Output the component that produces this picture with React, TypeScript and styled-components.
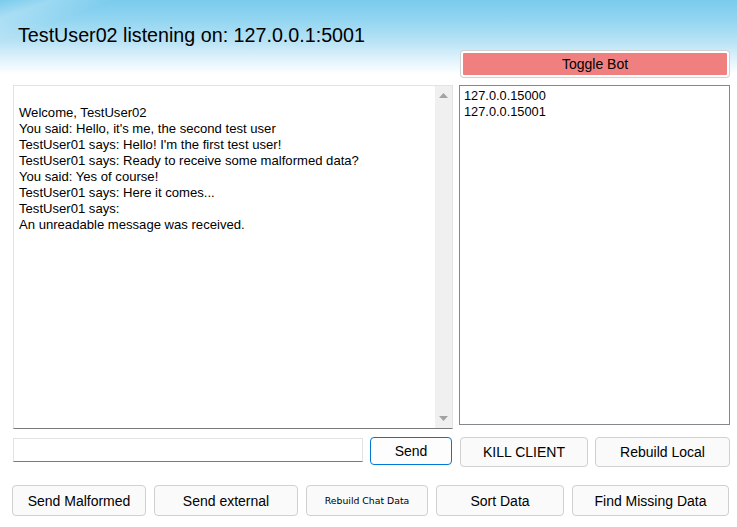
import React from "react";
import styled, { createGlobalStyle } from "styled-components";

const Global = createGlobalStyle`
  html, body { margin: 0; padding: 0; background: #ffffff; }
  body { font-family: "Liberation Sans", Arial, sans-serif; }
  * { box-sizing: border-box; }
`;

const Window = styled.div`
  width: 737px;
  height: 527px;
  overflow: hidden;
  position: relative;
  background:
    linear-gradient(160deg, rgba(255,255,255,0) 0px, rgba(255,255,255,0.25) 18px, rgba(255,255,255,0) 40px) 0 0 / 120px 72px no-repeat,
    linear-gradient(to bottom, #79cbed 0px, #93d5f1 20px, #b9e3f5 42px, #e6f5fc 62px, #ffffff 74px) 0 0 / 100% 74px no-repeat,
    #ffffff;
  display: flex;
  flex-direction: column;
`;

const Header = styled.header`
  height: 51px;
  padding: 23px 0 0 18px;
`;

const Title = styled.h1`
  margin: 0;
  font-family: "Liberation Sans", Arial, sans-serif;
  font-weight: normal;
  font-size: 19.7px;
  line-height: 24px;
  color: #000;
`;

const Row = styled.div<{ $top: number }>`
  display: grid;
  grid-template-columns: 440px 271px;
  column-gap: 6px;
  padding-left: 13px;
  margin-top: ${(p) => p.$top}px;
  align-items: start;
`;

const RightCell = styled.div`
  grid-column: 2;
  display: flex;
`;

const LeftCell = styled.div`
  display: flex;
  align-items: flex-start;
`;

const ToggleButton = styled.button`
  margin-left: 2px;
  width: 268px;
  height: 26px;
  border: 2px solid #ffffff;
  border-radius: 3px;
  box-shadow: 0 0 0 1px #d2d2d2;
  background: #f08080;
  font-family: "Liberation Sans", Arial, sans-serif;
  font-size: 14px;
  color: #000;
  padding: 0;
`;

const ChatBox = styled.div`
  height: 344px;
  border: 1px solid #e3e3e3;
  border-bottom-color: #7a7a7a;
  background: #fff;
  display: flex;
`;

const ChatText = styled.div`
  flex: 1;
  padding: 3px 0 0 5px;
  font-size: 13.1px;
  line-height: 16px;
  color: #000;
  white-space: pre-wrap;
`;

const ScrollBar = styled.div`
  width: 17px;
  background: #f0f0f0;
  display: flex;
  flex-direction: column;
  justify-content: space-between;
  align-items: center;
  padding: 7px 0 7px 0;
`;

const Arrow = styled.svg`
  display: block;
`;

const ListBox = styled.div`
  height: 340px;
  border: 1px solid #828790;
  background: #fff;
  padding: 2px 0 0 4px;
  font-size: 12.8px;
  line-height: 16px;
  color: #000;
`;

const TextInput = styled.input`
  margin-top: 1px;
  width: 350px;
  height: 24px;
  border: 1px solid #e3e3e3;
  border-bottom-color: #7a7a7a;
  background: #fff;
  outline: none;
  padding: 0 3px;
  font-family: "Liberation Sans", Arial, sans-serif;
  font-size: 13px;
`;

const Button = styled.button<{ $w: number; $h: number; $primary?: boolean; $small?: boolean }>`
  width: ${(p) => p.$w}px;
  height: ${(p) => p.$h}px;
  flex: none;
  padding: 0;
  border: 1px solid ${(p) => (p.$primary ? "#0078d7" : "#d0d0d0")};
  border-radius: 4px;
  background: ${(p) => (p.$primary ? "#fdfdfd" : "#fafafa")};
  color: #000;
  font-family: ${(p) => (p.$small ? '"DejaVu Sans", Verdana, sans-serif' : '"Liberation Sans", Arial, sans-serif')};
  font-size: ${(p) => (p.$small ? "9.3px" : "14px")};
`;

const SendWrap = styled.div`
  margin-left: 7px;
`;

const ButtonPair = styled.div`
  display: flex;
  gap: 7px;
  margin-left: 1px;
`;

const BottomBar = styled.div`
  display: flex;
  gap: 8px;
  padding-left: 12px;
  margin-top: 18px;
`;

const chatLines = [
  "",
  "Welcome, TestUser02",
  "You said: Hello, it's me, the second test user",
  "TestUser01 says: Hello! I'm the first test user!",
  "TestUser01 says: Ready to receive some malformed data?",
  "You said: Yes of course!",
  "TestUser01 says: Here it comes...",
  "TestUser01 says: ",
  "An unreadable message was received.",
].join("\n");

export default function App() {
  return (
    <>
      <Global />
      <Window>
        <Header>
          <Title>TestUser02 listening on: 127.0.0.1:5001</Title>
        </Header>
        <Row $top={0}>
          <RightCell>
            <ToggleButton>Toggle Bot</ToggleButton>
          </RightCell>
        </Row>
        <Row $top={8}>
          <ChatBox>
            <ChatText>{chatLines}</ChatText>
            <ScrollBar>
              <Arrow width="9" height="5" viewBox="0 0 9 5">
                <polygon points="0,5 9,5 4.5,0" fill="#a3a3a3" />
              </Arrow>
              <Arrow width="9" height="5" viewBox="0 0 9 5">
                <polygon points="0,0 9,0 4.5,5" fill="#a3a3a3" />
              </Arrow>
            </ScrollBar>
          </ChatBox>
          <ListBox>
            <div>127.0.0.15000</div>
            <div>127.0.0.15001</div>
          </ListBox>
        </Row>
        <Row $top={8}>
          <LeftCell>
            <TextInput />
            <SendWrap>
              <Button $w={82} $h={28} $primary>Send</Button>
            </SendWrap>
          </LeftCell>
          <ButtonPair>
            <Button $w={128} $h={30}>KILL CLIENT</Button>
            <Button $w={135} $h={30}>Rebuild Local</Button>
          </ButtonPair>
        </Row>
        <BottomBar>
          <Button $w={134} $h={31}>Send Malformed</Button>
          <Button $w={144} $h={31}>Send external</Button>
          <Button $w={122} $h={31} $small>Rebuild Chat Data</Button>
          <Button $w={128} $h={31}>Sort Data</Button>
          <Button $w={157} $h={31}>Find Missing Data</Button>
        </BottomBar>
      </Window>
    </>
  );
}
